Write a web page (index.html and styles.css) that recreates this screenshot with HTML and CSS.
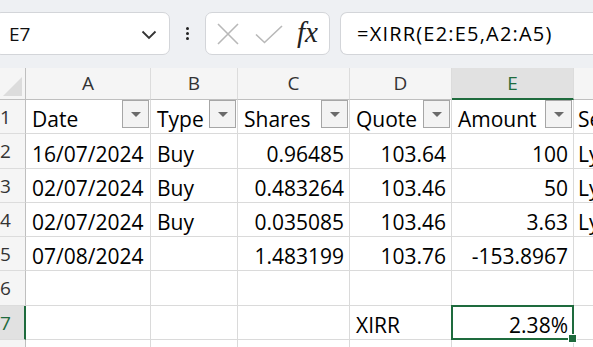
FILE: index.html
```html
<!DOCTYPE html>
<html lang="en">
<head>
  <meta charset="UTF-8" />
  <title>XIRR</title>
  <link rel="stylesheet" href="styles.css">
</head>
<body>

<div class="toolbar">
  <div class="name-box">
    <span>E7</span>
    <svg class="chev" width="16" height="10" viewBox="0 0 16 10"><path d="M1.5 1.5 L8 8 L14.5 1.5" fill="none" stroke="#333" stroke-width="1.8"/></svg>
  </div>
  <div class="dots"><i></i><i></i><i></i></div>
  <div class="fn-box">
    <svg class="ico-x" width="22" height="22" viewBox="0 0 22 22"><path d="M1 1 L21 21 M21 1 L1 21" stroke="#b8b8b8" stroke-width="1.6" fill="none"/></svg>
    <svg class="ico-ok" width="28" height="20" viewBox="0 0 28 20"><path d="M1 10.5 L9.5 18.5 L27 2" stroke="#b8b8b8" stroke-width="1.6" fill="none"/></svg>
    <span class="fx">fx</span>
  </div>
  <div class="formula">=XIRR(E2:E5,A2:A5)</div>
</div>

<div class="sheet">
  <!-- column headers -->
  <div class="corner"><span class="tri"></span></div>
  <div class="ch">A</div>
  <div class="ch">B</div>
  <div class="ch">C</div>
  <div class="ch">D</div>
  <div class="ch ch-sel">E</div>
  <div class="ch"></div>

  <!-- row 1 -->
  <div class="rh">1</div>
  <div class="c"><span class="t">Date</span><span class="flt"></span></div>
  <div class="c"><span class="t">Type</span><span class="flt"></span></div>
  <div class="c"><span class="t">Shares</span><span class="flt"></span></div>
  <div class="c"><span class="t">Quote</span><span class="flt"></span></div>
  <div class="c"><span class="t">Amount</span><span class="flt"></span></div>
  <div class="c f"><span class="t">Se</span></div>

  <!-- row 2 -->
  <div class="rh">2</div>
  <div class="c">16/07/2024</div>
  <div class="c">Buy</div>
  <div class="c num">0.96485</div>
  <div class="c num">103.64</div>
  <div class="c num">100</div>
  <div class="c f">Ly</div>

  <!-- row 3 -->
  <div class="rh">3</div>
  <div class="c">02/07/2024</div>
  <div class="c">Buy</div>
  <div class="c num">0.483264</div>
  <div class="c num">103.46</div>
  <div class="c num">50</div>
  <div class="c f">Ly</div>

  <!-- row 4 -->
  <div class="rh">4</div>
  <div class="c">02/07/2024</div>
  <div class="c">Buy</div>
  <div class="c num">0.035085</div>
  <div class="c num">103.46</div>
  <div class="c num">3.63</div>
  <div class="c f">Ly</div>

  <!-- row 5 -->
  <div class="rh">5</div>
  <div class="c">07/08/2024</div>
  <div class="c"></div>
  <div class="c num">1.483199</div>
  <div class="c num">103.76</div>
  <div class="c num">-153.8967</div>
  <div class="c f"></div>

  <!-- row 6 -->
  <div class="rh">6</div>
  <div class="c"></div>
  <div class="c"></div>
  <div class="c"></div>
  <div class="c"></div>
  <div class="c"></div>
  <div class="c f"></div>

  <!-- row 7 -->
  <div class="rh rh-sel">7</div>
  <div class="c"></div>
  <div class="c"></div>
  <div class="c"></div>
  <div class="c">XIRR</div>
  <div class="c num sel">2.38%<span class="handle"></span></div>
  <div class="c f"></div>

  <!-- row 8 (only its top shows) -->
  <div class="rh stub"></div>
  <div class="c stub"></div>
  <div class="c stub"></div>
  <div class="c stub"></div>
  <div class="c stub"></div>
  <div class="c stub"></div>
  <div class="c f stub"></div>
</div>

</body>
</html>
```

FILE: styles.css
```css
body {
  margin: 0;
  width: 593px;
  height: 347px;
  overflow: hidden;
  font-family: 'Open Sans', 'Liberation Sans', sans-serif;
  background: #fff;
}

/* formula bar */
.toolbar {
  height: 68px;
  box-sizing: border-box;
  padding-top: 12px;
  background: #eef0f3;
  display: flex;
  align-items: flex-start;
}

.name-box {
  margin-left: -6px;
  width: 176px;
  height: 43px;
  box-sizing: border-box;
  background: #fff;
  border: 1px solid #d3d5d9;
  border-radius: 7px;
  display: flex;
  align-items: center;
  justify-content: space-between;
  padding: 0 12px 0 14px;
  font-size: 19px;
  color: #111;
}

.name-box .chev {
  margin-top: 2px;
}

.dots {
  width: 35px;
  height: 43px;
  display: flex;
  flex-direction: column;
  align-items: center;
  justify-content: center;
  gap: 2px;
}

.dots i {
  display: block;
  width: 3px;
  height: 3px;
  border-radius: 50%;
  background: #222;
}

.fn-box {
  width: 125px;
  height: 43px;
  box-sizing: border-box;
  background: #fff;
  border: 1px solid #d3d5d9;
  border-radius: 7px;
  margin-right: 10px;
  display: flex;
  align-items: center;
  padding-left: 11px;
}

.ico-x {
  margin-right: 16px;
}

.ico-ok {
  margin-right: 14px;
  margin-top: 1px;
}

.fx {
  font-family: 'Liberation Serif', serif;
  font-style: italic;
  font-size: 29px;
  color: #222;
  margin-top: -3px;
}

.formula {
  flex: 1;
  height: 43px;
  box-sizing: border-box;
  background: #fff;
  border: 1px solid #d3d5d9;
  border-right: none;
  border-radius: 7px 0 0 7px;
  padding-left: 16px;
  display: flex;
  align-items: center;
  font-size: 20px;
  letter-spacing: 1.2px;
  color: #000;
  white-space: nowrap;
}

/* grid */
.sheet {
  display: grid;
  grid-template-columns: 26px 125px 87px 112px 102px 122px 40px;
  grid-template-rows: 32px repeat(7, 34.3px) 7px;
}

.corner,
.ch,
.rh,
.c {
  box-sizing: border-box;
  overflow: hidden;
  white-space: nowrap;
}

.corner {
  background: #f5f5f5;
  border-right: 1px solid #bfbfbf;
  border-bottom: 1px solid #bfbfbf;
  display: flex;
  justify-content: flex-end;
  align-items: flex-end;
  padding: 0 3px 3px 0;
}

.tri {
  width: 0;
  height: 0;
  border-left: 19px solid transparent;
  border-bottom: 19px solid #dcdcdc;
}

.ch {
  background: #f5f5f5;
  border-right: 1px solid #dcdcdc;
  border-bottom: 1px solid #bfbfbf;
  text-align: center;
  font-size: 19px;
  line-height: 31px;
  color: #333;
}

.ch-sel {
  background: #e1e1e1;
  color: #1e6b3d;
  border-bottom: 2px solid #1e6b3d;
}

.rh {
  background: #f5f5f5;
  border-right: 1px solid #bfbfbf;
  border-bottom: 1px solid #dcdcdc;
  text-align: right;
  padding-right: 15px;
  font-size: 19px;
  line-height: 34px;
  color: #333;
}

.rh-sel {
  background: #e1e1e1;
  color: #1e6b3d;
  border-right: 2px solid #1e6b3d;
  padding-right: 14px;
}

.c {
  border-right: 1px solid #dadada;
  border-bottom: 1px solid #dadada;
  display: flex;
  align-items: flex-end;
  padding: 0 5px 2px 6px;
  font-size: 21px;
  line-height: 24px;
  color: #000;
}

.c.num {
  justify-content: flex-end;
}

.c.f {
  padding-left: 4px;
  border-right: none;
}

.stub {
  border-bottom: none;
}

.c .t {
  flex: 1;
}

.flt {
  width: 27px;
  height: 28px;
  box-sizing: border-box;
  margin: 0 -4px 3px 0;
  align-self: center;
  border: 1px solid #a6a6a6;
  background: #f3f3f3;
  position: relative;
}

.flt::after {
  content: "";
  position: absolute;
  left: 8px;
  top: 11px;
  border-left: 5px solid transparent;
  border-right: 5px solid transparent;
  border-top: 5px solid #6a6a6a;
}

.c.sel {
  position: relative;
  overflow: visible;
}

.c.sel::before {
  content: "";
  position: absolute;
  left: -1px;
  top: -1px;
  right: -1px;
  bottom: -1px;
  border: 2px solid #1e6b3d;
}

.handle {
  position: absolute;
  right: -4px;
  bottom: -4px;
  width: 7px;
  height: 7px;
  background: #1e6b3d;
  border: 1px solid #fff;
}
```
